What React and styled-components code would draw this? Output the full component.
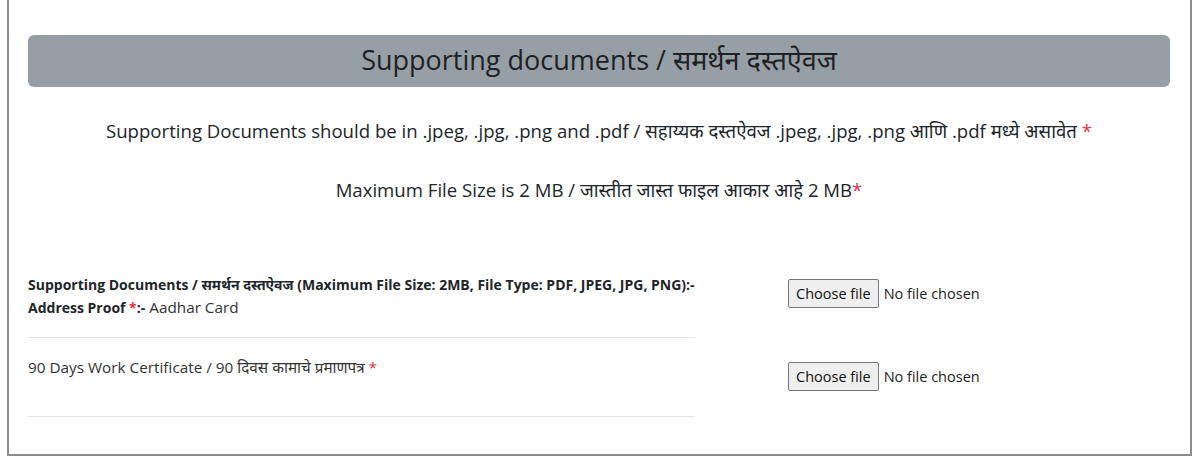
import React from 'react';
import styled, { createGlobalStyle } from 'styled-components';

const GlobalStyle = createGlobalStyle`
body {
  margin: 0;
  background: #ffffff;
  font-family: "Open Sans", "Noto Sans", sans-serif;
  color: #212529;
}
`;

const Card = styled.div`
margin-left: 7px;
width: 1185px;
box-sizing: border-box;
border: 2px solid #8c8c8c;
border-top: none;
padding: 35px 20px 37px 19px;
`;

const Header = styled.div`
background: #979fa6;
border-radius: 6px;
height: 52px;
display: flex;
align-items: center;
justify-content: center;
font-size: 27px;
line-height: 36px;
padding-bottom: 3px;
box-sizing: border-box;
color: #1e2124;
`;

const Note = styled.p`
margin: ${p => p.top}px 0 0;
text-align: center;
font-size: 18.6px;
line-height: 24px;
`;

const Star = styled.span`
color: #dc3545;
`;

const Row = styled.div`
display: flex;
margin-top: ${p => p.top || 0}px;
`;

const Label = styled.div`
width: 667px;
box-sizing: border-box;
min-height: 79px;
padding: 18px 0;
border-bottom: 1px solid #e6e6e6;
font-size: 15.3px;
line-height: 22px;
color: #333;
b {
  font-size: 14px;
  font-weight: 700;
  color: #212529;
}
`;

const Upload = styled.div`
flex: 1;
display: flex;
align-items: center;
padding-left: 93px;
padding-bottom: ${p => p.lift || 0}px;
font-size: 14.5px;
`;

const PickButton = styled.button`
font: inherit;
color: #111;
background: #efefef;
border: 1px solid #767676;
border-radius: 2px;
height: 29px;
padding: 0 7px;
margin-right: 5px;
cursor: pointer;
`;

const FileName = styled.span`
color: #222;
`;

function FileInput({ lift }) {
  return (
    <Upload lift={lift}>
      <PickButton type="button">Choose file</PickButton>
      <FileName>No file chosen</FileName>
    </Upload>
  );
}

export default function App() {
  return (
    <>
      <GlobalStyle />
      <Card>
        <Header>Supporting documents / समर्थन दस्तऐवज</Header>
        <Note top={32}>
          Supporting Documents should be in .jpeg, .jpg, .png and .pdf / सहाय्यक दस्तऐवज .jpeg, .jpg, .png आणि .pdf मध्ये असावेत <Star>*</Star>
        </Note>
        <Note top={35}>
          Maximum File Size is 2 MB / जास्तीत जास्त फाइल आकार आहे 2 MB<Star>*</Star>
        </Note>
        <Row top={53}>
          <Label>
            <b>Supporting Documents / समर्थन दस्तऐवज (Maximum File Size: 2MB, File Type: PDF, JPEG, JPG, PNG):-</b>
            <br />
            <b>Address Proof <Star>*</Star>:-</b> Aadhar Card
          </Label>
          <FileInput lift={6} />
        </Row>
        <Row>
          <Label>
            90 Days Work Certificate / 90 दिवस कामाचे प्रमाणपत्र <Star>*</Star>
          </Label>
          <FileInput lift={3} />
        </Row>
      </Card>
    </>
  );
}
